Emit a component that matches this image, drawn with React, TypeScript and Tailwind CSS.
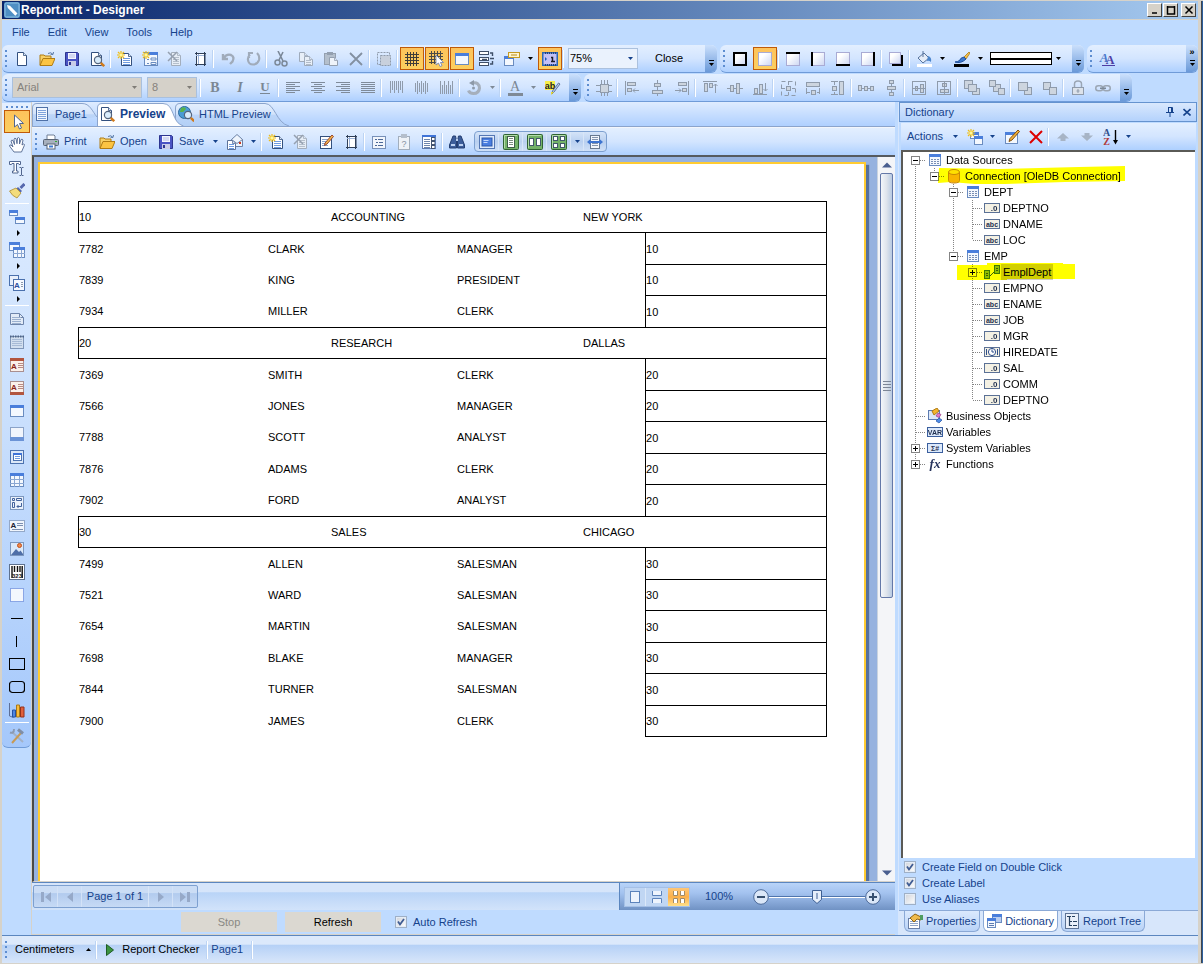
import React from "react";

/* ---------- icon drawing helpers ---------- */

const NAVY = "#33507e";
const GRAY = "#8f9bab";

type PageProps = { x?: number; y?: number; w?: number; h?: number; s?: string; f?: string };

function Sheet({ x = 3, y = 1, w = 10, h = 14, s = NAVY, f = "#fff" }: PageProps) {
  return (
    <>
      <path d={`M${x + 0.5} ${y + 0.5}h${w - 4}l3 3v${h - 4}h${-(w - 1)}z`} fill={f} stroke={s} />
      <path d={`M${x + w - 3.5} ${y + 0.5}v3h3`} fill="#dbe6f5" stroke={s} strokeWidth="0.8" />
    </>
  );
}

function Lines({ x, y, w, n, gap = 2, s = "#6f9be0" }: { x: number; y: number; w: number; n: number; gap?: number; s?: string }) {
  return (
    <>
      {Array.from({ length: n }, (_, i) => (
        <path key={i} d={`M${x} ${y + i * gap + 0.5}h${w}`} stroke={s} />
      ))}
    </>
  );
}

function Spark() {
  return (
    <>
      <path d="M4 0v8M0 4h8M1 1l6 6M7 1l-6 6" stroke="#eebc18" strokeWidth="1.2" />
      <rect x="2.5" y="2.5" width="3" height="3" fill="#fff79a" />
    </>
  );
}

function Win({ x = 1, y = 2, w = 14, h = 12, f = "#f4f8fe" }: PageProps) {
  return (
    <>
      <rect x={x + 0.5} y={y + 0.5} width={w - 1} height={h - 1} fill={f} stroke="#6a8cc0" />
      <rect x={x} y={y} width={w} height="3" fill="#4a7edb" />
    </>
  );
}

function Lens({ x = 9, y = 9 }: { x?: number; y?: number }) {
  return (
    <>
      <circle cx={x} cy={y} r="3.6" fill="#d9ecfb" stroke="#55657e" strokeWidth="1.2" />
      <path d={`M${x + 2.8} ${y + 2.8}l3.4 3.4`} stroke="#d07a1c" strokeWidth="2.4" />
    </>
  );
}

function Square({ top, right, bottom, left }: { top?: boolean; right?: boolean; bottom?: boolean; left?: boolean }) {
  return (
    <>
      <rect x="1.5" y="1.5" width="13" height="13" fill="url(#sq)" stroke="#a9abd4" />
      {top && <path d="M1 2h14" stroke="#000" strokeWidth="2" />}
      {right && <path d="M14 1v14" stroke="#000" strokeWidth="2" />}
      {bottom && <path d="M1 14h14" stroke="#000" strokeWidth="2" />}
      {left && <path d="M2 1v14" stroke="#000" strokeWidth="2" />}
    </>
  );
}

function Block({ x, y, w, h }: { x: number; y: number; w: number; h: number }) {
  return <rect x={x + 0.5} y={y + 0.5} width={w - 1} height={h - 1} fill="#cdd5df" stroke={GRAY} />;
}

function Floppy() {
  return (
    <>
      <path d="M1.5 1.5h12l1 1v12h-13z" fill="#4a54c4" stroke="#2d3590" />
      <rect x="4" y="2" width="8" height="6" fill="#f3f5ff" />
      <path d="M5 4h6M5 6h6" stroke="#b4bce4" />
      <rect x="4" y="10" width="8" height="5" fill="#c9cde8" />
      <rect x="5" y="11" width="2" height="3" fill="#2d3590" />
    </>
  );
}

function Folder() {
  return (
    <>
      <path d="M1 14V4h4l1 1h6v3" fill="#f7d066" stroke="#b07c14" />
      <path d="M1 14.5l3-7h12l-3 7z" fill="#fbc443" stroke="#b07c14" />
      <path d="M9 2.5q3-2 5 1m0 0l.5-2.5m-.5 2.5l-2.5-.2" fill="none" stroke="#5a7ba8" />
    </>
  );
}

function Field({ kind }: { kind: "num" | "abc" | "date" | "var" | "sys" }) {
  const label = { num: ".0", abc: "abc", date: "", var: "VAR", sys: "Σ#" }[kind];
  const blue = kind === "var" || kind === "sys";
  return (
    <>
      <rect x="0.5" y="3.5" width="15" height="9" fill={blue ? "#dce9fb" : "#f4f1e4"} stroke={blue ? "#3b5f9e" : "#5b7196"} />
      {kind === "date" ? (
        <>
          <circle cx="8" cy="8" r="3.6" fill="#fff" stroke="#2f4f8c" />
          <path d="M8 5.5V8h2M2.5 5v6M13.5 5v6" fill="none" stroke="#2f4f8c" />
        </>
      ) : (
        <text x={kind === "num" ? 10 : 8} y="11" textAnchor="middle" fontSize={kind === "num" ? 8 : 7} fontWeight="bold" fontFamily="Liberation Sans, sans-serif" fill="#1f2f4f">
          {label}
        </text>
      )}
    </>
  );
}

function Green({ children }: { children?: React.ReactNode }) {
  return (
    <>
      <rect x="0.5" y="0.5" width="15" height="15" rx="1" fill="#73b268" stroke="#2f6332" />
      <path d="M1.5 14V1.5H14" fill="none" stroke="#b4dcaa" />
      {children}
    </>
  );
}

const g = (d: string, w = 1, s = GRAY) => <path d={d} fill="none" stroke={s} strokeWidth={w} />;

const ICONS: Record<string, React.ReactNode> = {
  app: (
    <>
      <rect width="16" height="16" rx="2" fill="#4f8fc4" />
      <rect x="1" y="1" width="14" height="14" rx="1.5" fill="none" stroke="#8fc0e4" />
      <path d="M3 3l3 .8 7.5 7.7-2.2 2.2L3.800 6z" fill="#fff" />
    </>
  ),
  new: <Sheet />,
  open: <Folder />,
  save: <Floppy />,
  preview: (<><Sheet x={2} w={11} /><Lens /></>),
  newPage: (<><Sheet x={4} y={2} w={11} h={13} /><Lines x={6} y={7} w={7} n={4} /><Spark /></>),
  newForm: (<><Win x={2} y={1} w={14} h={14} /><path d="M5 8.5h2m2-1.500h5v2h-5zM5 12.500h2m2-1h5v2h-5z" stroke="#6a8cc0" fill="none" /><Spark /></>),
  delPage: (<><Sheet x={4} y={1} w={10} s="#a3aebd" f="#e6edf6" /><Lines x={6} y={6} w={6} n={4} s="#b5bfcc" />{g("M1 1l9 9M10 1L1 10", 1.5, "#95a0b0")}</>),
  pageSetup: (<><rect x="4.5" y="2.5" width="8" height="11" fill="#fff" stroke="#2f3f58" /><path d="M6.5 3v10M4 4.500h8" stroke="#9db4da" />{g("M3 2.5h2M4.5 1v2M12 2.5h2M12.5 1v2M3 13.5h11M12.5 13v2M4.5 13v2M13 3v11", 1, "#2f3f58")}</>),
  undo: g("M3 3v5h5M3.5 7.5q3-5 7.5-3.5 4 2 1.5 6.5L10 13", 2.4, "#a0abba"),
  redo: g("M12 2q3 3 2 7-1.5 4.5-6 4.5T3 9q-.5-3 2-5.5M8 2H4v5", 2.2, "#a0abba"),
  cut: (<>{g("M5 0l5 10M10 1L6 9", 1.6, "#7c8999")}<circle cx="4.5" cy="11.5" r="2.5" fill="none" stroke="#7c8999" strokeWidth="1.5" /><circle cx="11.5" cy="12.5" r="2.5" fill="none" stroke="#7c8999" strokeWidth="1.5" /></>),
  copy: (<><Sheet x={1} y={1} w={9} h={10} s="#9fabbb" f="#e8eff8" /><Sheet x={6} y={5} w={9} h={10} s="#9fabbb" f="#e8eff8" /><Lines x={8} y={9} w={5} n={3} s="#b2bcc9" /></>),
  paste: (<><rect x="1.5" y="2.5" width="11" height="11" fill="#b4bfcc" stroke="#94a0b0" /><rect x="4" y="1" width="6" height="3" fill="#94a0b0" /><Sheet x={6} y={6} w={9} h={9} s="#94a0b0" f="#eef3fa" /></>),
  del: g("M2 2l12 12M14 2L2 14", 1.8, "#8390a1"),
  select: (<><rect x="1.5" y="1.5" width="12" height="12" fill="none" stroke={GRAY} strokeDasharray="2 1" /><rect x="4.5" y="4.5" width="10" height="10" fill="#c8d0dc" stroke={GRAY} strokeDasharray="2 1" /></>),
  grid: g("M3.5 1v14M6.5 1v14M9.5 1v14M12.5 1v14M1 3.5h14M1 6.5h14M1 9.5h14M1 12.5h14", 1, "#3f3c38"),
  gridSnap: (<>{g("M2.5 0v13M5.5 0v13M8.5 0v13M11.5 0v13M0 2.5h14M0 5.5h14M0 8.5h14M0 11.5h8", 1, "#4b4a46")}<path d="M7 4v10l2.5-2 1.5 3.5 2-.8-1.5-3.2h3z" fill="#fff" stroke="#6a7dad" strokeWidth="0.8" /></>),
  window: <Win />,
  order: (<>{[1, 7, 12].map((y) => (<rect key={y} x="0.5" y={y - 0.5} width="9" height="3" fill="#fff" stroke="#3f4f68" />))}{g("M11 2h2.5v3M11 13h2.5v-3", 1.4, "#3f4f68")}{g("M11 7.5h4M3 8.500h5", 1.5, "#3f4f68")}</>),
  note: (<><Win x={0} y={5} w={10} h={10} /><rect x="4.5" y="1.5" width="11" height="5" fill="#fff5cf" stroke="#c59a22" /><path d="M7 4h6" stroke="#b68c1a" /></>),
  ruler: (<><rect x="0.75" y="1.75" width="14.5" height="12.5" fill="#c3c0f6" stroke="#2c67b5" strokeWidth="1.5" />{g("M3.5 1v2M5.5 1v2M7.5 1v2M9.5 1v2M11.5 1v2M13.5 1v2M3.5 13v2M5.5 13v2M7.5 13v2M9.5 13v2M11.5 13v2M13.5 13v2", 1, "#23407e")}<path d="M3 6v4l2-2z" fill="#1c5bc2" />{g("M9 6.5h1.5v4M9 10.5h4", 1.5, "#1c1c28")}</>),
  bold: <text x="8" y="12" textAnchor="middle" fontSize="14" fontWeight="bold" fontFamily="Liberation Serif, serif" fill="#7b8794">B</text>,
  italic: <text x="8" y="12" textAnchor="middle" fontSize="14" fontWeight="bold" fontStyle="italic" fontFamily="Liberation Serif, serif" fill="#7b8794">I</text>,
  underline: (<><text x="8" y="11" textAnchor="middle" fontSize="13" fontFamily="Liberation Serif, serif" fontWeight="bold" fill="#7b8794">U</text>{g("M3 13.5h10", 1, "#7b8794")}</>),
  alignL: g("M1 2.5h14M1 4.5h9M1 6.5h14M1 8.5h9M1 10.5h14M1 12.5h9", 1, "#7f8b9a"),
  alignC: g("M1 2.5h14M4 4.5h8M1 6.5h14M4 8.5h8M1 10.5h14M4 12.5h8", 1, "#7f8b9a"),
  alignR: g("M1 2.5h14M6 4.5h9M1 6.5h14M6 8.5h9M1 10.5h14M6 12.5h9", 1, "#7f8b9a"),
  alignJ: g("M1 2.5h14M1 4.5h14M1 6.5h14M1 8.5h14M1 10.5h14M1 12.5h14", 1, "#7f8b9a"),
  vTop: g("M2.5 1v12M4.5 1v9M6.5 1v12M8.5 1v9M10.5 1v12M12.5 1v9M14.5 1v12"),
  vMid: g("M2.5 3v9M4.5 1v13M6.5 3v9M8.5 1v13M10.5 3v9M12.5 1v13M14.5 3v9"),
  vBot: g("M2.5 1v13M4.5 5v9M6.5 1v13M8.5 5v9M10.5 1v13M12.5 5v9M14.5 1v13"),
  rotate: (<>{g("M7 3q6-1 6.500 5-.5 5.500-6 5.500-4 0-5-3", 3, "#a5afbc")}<path d="M8 0v6L3 3z" fill="#8d99a8" /><circle cx="7.5" cy="8" r="1.5" fill={GRAY} /></>),
  fontColor: (<><text x="8" y="11" textAnchor="middle" fontSize="14" fontFamily="Liberation Serif, serif" fill="#7b8794">A</text><rect x="1" y="13" width="15" height="3" fill="#7f8a97" /></>),
  highlight: (<><rect x="0" y="1" width="10" height="9" fill="#f7ee4a" /><text x="5" y="9" textAnchor="middle" fontSize="9" fontWeight="bold" fontFamily="Liberation Sans, sans-serif" fill="#222">ab</text><path d="M15 4l-6 8-2 2 .5-3 6-8z" fill="#b9cdec" stroke="#4b5f86" strokeWidth="0.8" /><path d="M6 12h3l-3 3z" fill="#e9d932" /></>),
  rectFull: <rect x="2" y="2" width="12" height="12" fill="url(#sq)" stroke="#000" strokeWidth="2" />,
  rectNone: <Square />,
  rectTop: <Square top />,
  rectLeft: <Square left />,
  rectBottom: <Square bottom />,
  rectRight: <Square right />,
  shadow: (<><rect x="4" y="4" width="11" height="11" fill="#000" /><rect x="1.5" y="1.5" width="11" height="11" fill="url(#sq)" stroke="#a9abd4" /></>),
  fill: (<><path d="M2 7l6-5 5 5-6 5z" fill="#e4ecf8" stroke="#56739c" /><path d="M7 0v6" stroke="#56739c" /><path d="M12 5q4 1 3 6-2-2-4-1z" fill="#4c86cc" /><rect x="1" y="13" width="15" height="3" fill="#fff" /></>),
  brush: (<><path d="M15 1l-5 5 2 2 4-6z" fill="#f4c04a" stroke="#a97818" strokeWidth="0.8" /><path d="M10 6q-4 1-4 3-2 2-5 2 6 2 11-3z" fill="#3d78cf" stroke="#23519b" /><rect x="0" y="13" width="15" height="3" fill="#000" /></>),
  styles: (<><text x="5" y="11" textAnchor="middle" fontSize="13" fontStyle="italic" fontWeight="bold" fontFamily="Liberation Serif, serif" fill="#4a79cc">A</text><text x="11" y="13" textAnchor="middle" fontSize="12" fontWeight="bold" fontFamily="Liberation Serif, serif" fill="#4d3da4">A</text><path d="M3 14.5h13" stroke="#4d3da4" /></>),
  alignGrid: (<><Block x={4} y={4} w={9} h={9} />{g("M5.5 0v4M11.5 0v4M5.5 13v3M11.5 13v3M0 5.5h4M0 11.5h4M13 5.5h3M13 11.5h3M8.5 0v4M8.5 13v3")}</>),
  oLeft: (<>{g("M1.5 1v14")}<Block x={3} y={2} w={9} h={4} /><Block x={3} y={8} w={5} h={4} />{g("M15 10.5H9m2-2l-2 2 2 2")}</>),
  oCenter: (<>{g("M8.5 0v16")}<Block x={5} y={3} w={7} h={4} /><Block x={3} y={10} w={11} h={4} /></>),
  oRight: (<>{g("M14.5 1v14")}<Block x={4} y={2} w={9} h={4} /><Block x={8} y={8} w={5} h={4} />{g("M1 10.5h6m-2-2l2 2-2 2")}</>),
  oTop: (<>{g("M1 1.5h14")}<Block x={2} y={3} w={4} h={9} /><Block x={7} y={3} w={4} h={5} />{g("M13.5 13V4m-2 2l2-2 2 2")}</>),
  oMiddle: (<>{g("M0 8.5h16")}<Block x={3} y={5} w={4} h={7} /><Block x={9} y={3} w={4} h={11} /></>),
  oBottom: (<>{g("M1 14.5h14")}<Block x={2} y={8} w={4} h={6} /><Block x={7} y={4} w={4} h={10} />{g("M13.5 3v8m-2-2l2 2 2-2")}</>),
  sizeBoth: (<><rect x="1.5" y="1.5" width="14" height="14" fill="none" stroke={GRAY} strokeDasharray="4 3" /><Block x={6} y={6} w={5} h={5} />{g("M8.5 1v4M8.5 12v3M1 8.5h4M12 8.5h3")}</>),
  sizeW: (<><Block x={1} y={2} w={14} h={5} /><Block x={6} y={10} w={5} h={5} />{g("M1 12.5h4M12 12.5h3M1.5 8v6M14.5 8v6")}</>),
  sizeH: (<><Block x={9} y={1} w={5} h={14} /><Block x={2} y={6} w={5} h={5} />{g("M4.5 1v4M4.5 12v3M1 1.5h7M1 14.5h7")}</>),
  spaceH: (<>{g("M0 8.5h16")}<Block x={0} y={5} w={4} h={6} /><Block x={6} y={6} w={4} h={5} /><Block x={12} y={6} w={4} h={5} /></>),
  spaceV: (<>{g("M8.5 0v16")}<Block x={6} y={0} w={5} h={4} /><Block x={4} y={6} w={9} h={4} /><Block x={6} y={12} w={5} h={4} /></>),
  centerH: (<><rect x="1.5" y="1.5" width="13" height="13" fill="none" stroke={GRAY} /><Block x={4} y={6} w={3} h={5} /><Block x={9} y={4} w={4} h={9} />{g("M2 8.5h12")}</>),
  centerV: (<><rect x="1.5" y="1.5" width="13" height="13" fill="none" stroke={GRAY} /><Block x={6} y={3} w={5} h={4} /><Block x={4} y={9} w={9} h={4} />{g("M8.5 2v12")}</>),
  front: (<><Block x={0} y={0} w={9} h={9} /><Block x={8} y={8} w={8} h={7} /><Block x={4} y={4} w={9} h={8} /></>),
  back: (<><Block x={4} y={4} w={8} h={8} /><Block x={0} y={0} w={7} h={7} /><Block x={9} y={8} w={7} h={7} /></>),
  forward: (<><Block x={7} y={7} w={8} h={8} /><Block x={1} y={2} w={10} h={9} /></>),
  backward: (<><Block x={1} y={2} w={8} h={8} /><Block x={7} y={7} w={8} h={8} /></>),
  lock: (<>{g("M4.5 8V4q0-3 3.500-3t3.500 3v4", 1.5, "#9ba6b4")}<rect x="2.5" y="7.5" width="11" height="7" fill="#dce2ea" stroke={GRAY} /><path d="M8 9v4M6.5 11h3" stroke={GRAY} /></>),
  link: (<><rect x="0.75" y="5.75" width="7" height="5" rx="2.5" fill="none" stroke="#9ba6b4" strokeWidth="1.5" /><rect x="8.25" y="5.75" width="7" height="5" rx="2.5" fill="none" stroke="#9ba6b4" strokeWidth="1.5" /><path d="M5 8.25h6" stroke="#7d8998" strokeWidth="1.5" /></>),
  pointer: <path d="M5.5 1v12l3-2.500 2 4.500 2-1-2-4.500h4z" fill="#fff" stroke="#51668f" />,
  hand: <path d="M5 15l-4.500-6q0-1.500 1.500-1l2 2-2-6q.5-1.500 2-.5l1.500 4L5 2q.8-1.500 2-.3l1 5L8.500 1q1-1 2 .3V7l1.500-4.500q1.200-.8 2 .5L13 8l1.500-1q1.500.2.8 1.500L12.500 15z" fill="#fff" stroke="#51668f" strokeWidth="0.9" />,
  textTool: (<><path d="M.5 1.500h11v3H10l-.5-1h-2V11H9v2H3.500v-2H5V3.500H3l-.5 1H.5z" fill="#fff" stroke="#51668f" /><path d="M10.500 7.500h1.500l.5.5.5-.5h1.500M12.500 8v7M10.500 15.500h1.500l.5-.5.5.5h1.500" fill="none" stroke="#51668f" /></>),
  broom: (<><path d="M15.500 1l-4 4" stroke="#5668ae" strokeWidth="3" /><path d="M9 4l4 4-1.500 1.500-4-4z" fill="#5668ae" /><path d="M7 5l5 5-4 5Q3 13 .5 8z" fill="#f3dc7c" stroke="#a98b34" strokeWidth="0.8" /></>),
  bands: (<><Win x={0} y={1} w={9} h={6} /><Win x={6} y={8} w={10} h={7} /></>),
  crossBands: (<><Win x={0} y={0} w={11} h={9} /><Win x={4} y={5} w={12} h={11} />{g("M4 11.5h12M8.5 8v8M12.5 8v8", 1, "#8ba7d2")}</>),
  texts: (<><rect x="0.5" y="0.5" width="9" height="10" fill="#e8effb" stroke="#4a70ad" /><rect x="4.5" y="4.5" width="11" height="11" fill="#f6f9ff" stroke="#4a70ad" /><text x="8" y="13" textAnchor="middle" fontSize="8" fontWeight="bold" fontFamily="Liberation Sans, sans-serif" fill="#2c51a0">A</text>{g("M12 7.5h2M12 9.5h2M12 11.5h2")}</>),
  reportTitle: (<><path d="M1.5 2.5h9l4 4v7h-13z" fill="#e2ebf7" stroke="#6e85ab" /><path d="M10.5 2.5v4h4" fill="none" stroke="#6e85ab" /><Lines x={3} y={6} w={9} n={4} s="#9bb0cf" /></>),
  reportSummary: (<><rect x="1.5" y="2.5" width="13" height="12" fill="#d2dfef" stroke="#7f96b8" /><path d="M1 2.5h14" stroke="#4e6486" strokeWidth="2" strokeDasharray="1.5 1" /><Lines x={3} y={5} w={10} n={4} s="#a7bad5" /></>),
  headerBand: (<><rect x="1.5" y="2.5" width="13" height="12" fill="#fbf0ea" stroke="#a98f90" /><rect x="1" y="1" width="14" height="3" fill="#b2553f" /><text x="5" y="12" textAnchor="middle" fontSize="8" fontWeight="bold" fontFamily="Liberation Sans, sans-serif" fill="#8a2418">A</text><Lines x={9} y={6} w={5} n={3} s="#b98b84" /></>),
  footerBand: (<><rect x="1.5" y="1.5" width="13" height="12" fill="#fbf0ea" stroke="#a98f90" /><rect x="1" y="12" width="14" height="3" fill="#b2553f" /><text x="5" y="10" textAnchor="middle" fontSize="8" fontWeight="bold" fontFamily="Liberation Sans, sans-serif" fill="#8a2418">A</text><Lines x={9} y={4} w={5} n={3} s="#b98b84" /></>),
  pageFooter: (<><rect x="1.5" y="1.5" width="13" height="13" fill="#f1f5fc" stroke="#8ba3c8" /><rect x="1" y="11" width="14" height="4" fill="#6b93d6" /></>),
  dataBand: (<><rect x="1.5" y="1.5" width="13" height="13" fill="#dce8f8" stroke="#4d73b0" /><rect x="4.5" y="4.5" width="8" height="7" fill="#fff" stroke="#4d73b0" /><rect x="4" y="4" width="9" height="2" fill="#3f74d8" /><Lines x={6} y={7} w={5} n={2} /></>),
  table: (<><Win x={1} y={1} w={14} h={14} />{g("M1 7.5h14M1 11.5h14M5.5 4v11M10.5 4v11", 1, "#8ba7d2")}</>),
  crossTab: (<><rect x="1.5" y="1.5" width="13" height="13" fill="#eaf1fb" stroke="#7c97be" />{g("M3.5 3.5h2v2h-2zM7.5 3.5h5v2h-5zM3.5 7.5h2v5h-2z", 1, "#42629c")}{g("M12.5 8v3.500H8m1.500-1.500L8 11.500 9.500 13", 1, "#42629c")}</>),
  textComp: (<><rect x="0.5" y="2.5" width="15" height="11" fill="#f0f5fc" stroke="#93a8c8" /><text x="4.5" y="10" textAnchor="middle" fontSize="8" fontWeight="bold" fontFamily="Liberation Sans, sans-serif" fill="#223">A</text><Lines x={8} y={5} w={6} n={2} s="#7c8fb0" /><Lines x={3} y={11} w={11} n={1} s="#7c8fb0" /></>),
  image: (<><rect x="1.5" y="1.5" width="13" height="13" fill="#dbe9fa" stroke="#7c97be" /><path d="M2 14l5-6 3 3 1.500-1.500L14 13v1z" fill="#4f6fa8" /><circle cx="10.5" cy="4.5" r="2" fill="#f08a4a" stroke="#c0501c" /></>),
  barcode: (<><rect x="0.5" y="0.5" width="15" height="15" fill="#fff" stroke="#5d718f" /><path d="M3 2v12M5.500 2v6M8.500 2v6M11 2v6M13.200 2v12" stroke="#111" strokeWidth="1.4" /><text x="8" y="14" textAnchor="middle" fontSize="6" fontWeight="bold" fontFamily="Liberation Sans, sans-serif" fill="#111">323</text></>),
  panel: <rect x="1.5" y="1.5" width="13" height="13" fill="#f3f7fd" stroke="#4066cc" strokeDasharray="1 1" />,
  hLine: <path d="M2 8.5h12" stroke="#000" />,
  vLine: <path d="M7.5 3v11" stroke="#000" />,
  rect: <rect x="0.5" y="2.5" width="15" height="11" fill="none" stroke="#000" />,
  roundRect: <rect x="0.5" y="2.5" width="15" height="11" rx="3" fill="none" stroke="#000" strokeWidth="1.2" />,
  chart: (<>{g("M.5 1v13l4 1.5", 1, "#5c6f98")}<path d="M3.5 8h3v7h-3z" fill="#4e86e0" stroke="#2452a4" /><path d="M7.5 3h3v12h-3z" fill="#f9bd3c" stroke="#a97818" /><path d="M11.5 5h3.5v10h-3.5z" fill="#e0603c" stroke="#96311a" /></>),
  tools: (<>{g("M3 4l11 10", 2, "#a3b1c6")}{g("M12 5L3 15", 2, "#c79a55")}{g("M9 1.500l5 4", 3, "#7f8ea6")}{g("M1 4.500q4 1.500 4-3.500", 2, "#8b9ab2")}</>),
  print: (<><path d="M4 6V1h7l1 1v4" fill="#fff" stroke="#6f7f96" /><rect x="0.5" y="5.5" width="15" height="6" rx="1" fill="#a7b0bd" stroke="#586476" /><rect x="4" y="10" width="8" height="5" fill="#fff" stroke="#586476" /><path d="M6 12.5h4" stroke="#3d7ad0" strokeWidth="2" /><rect x="12" y="7" width="2" height="1" fill="#3a3" /></>),
  mail: (<><path d="M4.5 5.5l5.500-5 5.500 5v7h-11z" fill="#eef4fc" stroke="#6c82a6" /><path d="M4.5 5.5l5.500 4 5.500-4" fill="none" stroke="#6c82a6" /><Sheet x={0} y={6} w={9} h={10} s="#5c7299" /><Lines x={2} y={10} w={5} n={3} /><path d="M13 8v2" stroke="#d03a20" strokeWidth="2" /></>),
  editPage: (<><rect x="2.5" y="2.5" width="11" height="12" fill="#fff" stroke={NAVY} /><Lines x={4} y={5} w={6} n={4} s="#8aa4cc" /><path d="M14 1l1.500 1.500L9 10l-2.500 1.500.5-2.500z" fill="#f2b84a" stroke="#9a4430" /></>),
  bookmark: (<><rect x="1.5" y="2.5" width="13" height="12" fill="#f2f6fc" stroke="#7790b8" />{g("M4 5.5h2M7 5.5h5M5 8.5h2M8 8.5h4M4 11.5h2M7 11.5h5", 1, "#4c6897")}</>),
  params: (<><rect x="2.5" y="2.5" width="11" height="13" fill="#eef2f7" stroke="#a2aebd" /><rect x="5" y="0" width="6" height="4" fill="#b4becb" /><text x="8" y="13" textAnchor="middle" fontSize="9" fontFamily="Liberation Sans, sans-serif" fill="#8793a3">?</text></>),
  thumbs: (<><rect x="1.5" y="1.5" width="13" height="13" fill="#fff" stroke="#5d7bb0" /><rect x="1" y="1" width="14" height="2" fill="#3f74d8" /><Lines x={3} y={5} w={6} n={5} s="#6d85ac" /><path d="M12 3v12" stroke="#43546f" strokeWidth="4" /><path d="M11 5h2.500M11 9h2.500M11 13h2.500" stroke="#fff" strokeWidth="2" /></>),
  find: (<><path d="M4 2h2.500l1 5v7H.5v-3zM9.500 2H12l3.500 9v3h-7V7z" fill="#3c5d9a" stroke="#253f72" /><path d="M2 11h4M10 11h4M7 6h2" stroke="#bcd0f0" strokeWidth="2" /></>),
  fullScreen: (<><rect x="0.5" y="1.5" width="15" height="13" fill="#dfeafb" stroke="#5477b4" /><rect x="3" y="4" width="10" height="8" fill="#4b7ee0" stroke="#2b56a8" /><path d="M4.5 6.5h5M4.5 8.5h4" stroke="#c4d8fb" /></>),
  viewOne: (<Green><rect x="4.5" y="2.5" width="7" height="11" fill="#fff" stroke="#3e5d48" /><Lines x={6} y={4} w={4} n={4} s="#7a8f80" /></Green>),
  viewTwo: (<Green><rect x="2.5" y="4.5" width="4" height="7" fill="#fff" stroke="#42586a" /><rect x="9.5" y="4.5" width="4" height="7" fill="#fff" stroke="#42586a" /></Green>),
  viewMany: (<Green>{[[2.5, 2.5], [9.5, 2.5], [2.5, 9.5], [9.5, 9.5]].map(([x, y]) => (<rect key={`${x}-${y}`} x={x} y={y} width="4" height="4" fill="#fff" stroke="#42586a" />))}</Green>),
  pageWidth: (<><rect x="3.5" y="1.5" width="9" height="13" fill="#f2f6fc" stroke="#67788f" /><Lines x={5} y={3} w={6} n={5} s="#8494ac" /><path d="M0 8l3.500-3v6zM16 8l-3.500-3v6z" fill="#3d74d0" /><path d="M2 8h12" stroke="#3d74d0" strokeWidth="2" /></>),
  htmlPreview: (<><circle cx="6.5" cy="6.5" r="6" fill="#4b9cd4" stroke="#2c6a9c" /><path d="M3 2q4-2 5 1l-3 3-3 0zM7 7l4-1 1 2-3 4-2-1z" fill="#58b34a" /><Lens x={10} y={9} /></>),
  pageTab: (<><rect x="2.5" y="1.5" width="11" height="13" fill="#f2f7fe" stroke="#4f71a8" /><Lines x={4} y={4} w={8} n={5} s="#7fa3dc" /></>),
  newItem: (<><Win x={3} y={3} w={9} h={7} /><Win x={7} y={7} w={9} h={9} /><Spark /></>),
  edit: (<><Win x={1} y={3} w={13} h={12} /><path d="M14 1l1.500 1.500L8 11l-3 1.500 1-3z" fill="#f2b23a" stroke="#83500f" /></>),
  remove: g("M2 2l12 12M14 2L2 14", 2, "#d00"),
  up: <path d="M8 4l6 5.500h-3.500V12h-5V9.500H2z" fill="#a7b4c5" />,
  down: <path d="M8 12l6-5.500h-3.500V4h-5v2.500H2z" fill="#a7b4c5" />,
  sort: (<><text x="3.5" y="7" textAnchor="middle" fontSize="10" fontWeight="bold" fontFamily="Liberation Serif, serif" fill="#30508c">A</text><text x="3.5" y="15.5" textAnchor="middle" fontSize="10" fontWeight="bold" fontFamily="Liberation Serif, serif" fill="#b03838">Z</text><path d="M12.5 1v11" stroke="#000" strokeWidth="1.4" /><path d="M10 11h5l-2.500 4.500z" fill="#000" /></>),
  dataTable: (<><Win x={2} y={2} w={12} h={12} />{g("M4 7.5h2m1 0h2m1 0h2M4 9.5h2m1 0h2m1 0h2M4 11.5h2m1 0h2m1 0h2", 1, "#7a8fb4")}</>),
  database: (<><path d="M2.5 4v8.500q0 2.500 5.500 2.500t5.500-2.500V4" fill="#f9b52c" stroke="#c98a18" /><ellipse cx="8" cy="4" rx="5.5" ry="2.5" fill="#ffe07a" stroke="#c98a18" /></>),
  relation: (<><rect x="0.5" y="6.5" width="5" height="8" fill="#8fbf40" stroke="#3f7a28" /><rect x="10.5" y="1.5" width="5" height="8" fill="#8fbf40" stroke="#3f7a28" />{g("M2 9.5h2M2 11.5h2M12 4.5h2M12 6.5h2M6 12l4-4", 1, "#3f5f1c")}</>),
  num: <Field kind="num" />,
  abc: <Field kind="abc" />,
  date: <Field kind="date" />,
  variable: <Field kind="var" />,
  system: <Field kind="sys" />,
  business: (<><rect x="1.5" y="2.5" width="11" height="9" fill="#dce8f8" stroke="#5d7bb0" /><path d="M5 3l5-3 2 3-5 4z" fill="#f5b52c" stroke="#b07c14" /><path d="M11 5l3 1.500-2 3-3-1.500z" fill="#e07ac8" stroke="#9c3f86" strokeWidth="0.7" /><path d="M12 10l3 2-3 3-3-2z" fill="#4c8ce8" stroke="#2452a4" strokeWidth="0.7" /></>),
  fx: <text x="8" y="12" textAnchor="middle" fontSize="13" fontStyle="italic" fontWeight="bold" fontFamily="Liberation Serif, serif" fill="#26335c">fx</text>,
  properties: (<><rect x="1.5" y="5.5" width="11" height="10" fill="#fff" stroke="#6a7fa6" /><Lines x={3} y={8} w={8} n={3} s="#8fa4c6" /><path d="M3 5l5-4 6 3v3l-4-1-3 3z" fill="#f0bb4c" stroke="#8f6414" /><path d="M13 2h3v5h-3z" fill="#4f9c60" /></>),
  dictionary: (<><Win x={6} y={1} w={10} h={9} f="#b9cdf0" /><Win x={1} y={5} w={9} h={10} />{g("M3 10.5h5M3 12.5h5", 1, "#5d7bb0")}</>),
  reportTree: (<><rect x="1.5" y="0.5" width="13" height="15" fill="#eaf0fa" stroke="#5d7395" />{g("M3 3.5h4M5.5 4v8.500H8M5.5 8.5H8M9 8.5h4M9 12.5h4M8 3.5h3", 1.2, "#26405f")}</>),
};

function Icon({ name }: { name: string }) {
  return (
    <svg viewBox="0 0 16 16" aria-hidden="true" className="size-4 shrink-0">
      {ICONS[name]}
    </svg>
  );
}

/* ---------- toolbar parts ---------- */

function Tri({ dir = "down", tone = "text-black" }: { dir?: "down" | "up" | "right"; tone?: string }) {
  const d = { down: "M0 1h5L2.5 4z", up: "M0 4h5L2.5 1z", right: "M1 0v6l3-3z" }[dir];
  return (
    <svg viewBox="0 0 5 6" aria-hidden="true" className={`h-[6px] w-[5px] shrink-0 ${tone}`}>
      <path d={d} fill="currentColor" />
    </svg>
  );
}

function Btn({ icon, on, tight }: { icon: string; on?: boolean; tight?: boolean }) {
  return (
    <button type="button" aria-label={icon} aria-pressed={on} className={`flex h-[23px] shrink-0 items-stretch pl-px ${tight ? "w-6" : "w-[25px]"}`}>
      <span className={`flex flex-1 items-center justify-center ${on ? "border border-[#c05a08] bg-linear-to-b from-[#fdc35c] to-[#fccf5f]" : ""}`}>
        <Icon name={icon} />
      </span>
    </button>
  );
}

function Drop({ label, tone }: { label: string; tone?: string }) {
  return (
    <button type="button" aria-label={label} className="flex h-[23px] w-[13px] shrink-0 items-center justify-center">
      <Tri tone={tone} />
    </button>
  );
}

function Sep() {
  return <span className="mr-px h-[18px] w-[2px] shrink-0 border-r border-white bg-[#bcd4f4]" />;
}

function Grip() {
  return (
    <span className="flex w-[7px] shrink-0 flex-col items-center gap-[3px]">
      {[0, 1, 2, 3].map((i) => (
        <span key={i} className="size-[2px] bg-[#5d8dd0]" />
      ))}
    </span>
  );
}

function Bar({ children, className = "", more }: { children: React.ReactNode; className?: string; more?: boolean }) {
  return (
    <div className={`flex h-7 items-stretch overflow-hidden rounded-md border-b border-[#6f9bd8] bg-linear-to-b from-[#e3efff] via-[#d3e5ff] to-[#aed0ff] ${className}`}>
      <div className="flex min-w-0 flex-1 items-center">
        <Grip />
        {children}
      </div>
      <button type="button" aria-label="Toolbar options" className="flex w-[12px] shrink-0 flex-col items-center justify-end gap-px bg-linear-to-b from-[#cbe0fc] to-[#6a99d8] pb-1">
        {more && <span className="mb-[3px] text-[9px] leading-[7px] font-bold text-black">»</span>}
        <span className="h-px w-[5px] bg-black" />
        <Tri />
      </button>
    </div>
  );
}

function Btns({ names, on = [], tight }: { names: string[]; on?: string[]; tight?: boolean }) {
  return (
    <>
      {names.map((n) => (
        <Btn key={n} icon={n} on={on.includes(n)} tight={tight} />
      ))}
    </>
  );
}

function Combo({ label, value, disabled, width }: { label: string; value: string; disabled?: boolean; width: string }) {
  return (
    <span className={`relative flex h-[21px] shrink-0 items-center ${width}`}>
      <select
        aria-label={label}
        disabled={disabled}
        defaultValue={value}
        className={`h-full w-full appearance-none border text-[11px] opacity-100 ${disabled ? "border-[#a9c0de] bg-[#d5d1c9] pl-1 text-[#85827c]" : "border-[#abc1de] bg-[#eaf2fd] pl-px text-black"}`}
      >
        <option>{value}</option>
      </select>
      <span className="pointer-events-none absolute right-[5px]">
        <Tri tone={disabled ? "text-[#7f7c76]" : "text-[#15428b]"} />
      </span>
    </span>
  );
}

function Check({ label, checked }: { label: string; checked?: boolean }) {
  return (
    <label className="flex h-4 items-center gap-[6px] text-[11px] text-[#15428b]">
      <span className="relative flex size-3">
        <input type="checkbox" defaultChecked={checked} className="peer size-3 appearance-none border border-[#9fb0c6] bg-linear-to-br from-[#cfd3da] to-white ring-1 ring-[#e4ecf6] ring-inset" />
        <svg viewBox="0 0 12 12" aria-hidden="true" className="pointer-events-none absolute inset-0 hidden peer-checked:block">
          <path d="M3 5.5l2 3 4-5.5" fill="none" stroke="#3f5c93" strokeWidth="1.8" />
        </svg>
      </span>
      {label}
    </label>
  );
}

/* ---------- document ---------- */

type Dept = { no: string; name: string; city: string; staff: [string, string, string][] };

const DEPTS: Dept[] = [
  { no: "10", name: "ACCOUNTING", city: "NEW YORK", staff: [["7782", "CLARK", "MANAGER"], ["7839", "KING", "PRESIDENT"], ["7934", "MILLER", "CLERK"]] },
  { no: "20", name: "RESEARCH", city: "DALLAS", staff: [["7369", "SMITH", "CLERK"], ["7566", "JONES", "MANAGER"], ["7788", "SCOTT", "ANALYST"], ["7876", "ADAMS", "CLERK"], ["7902", "FORD", "ANALYST"]] },
  { no: "30", name: "SALES", city: "CHICAGO", staff: [["7499", "ALLEN", "SALESMAN"], ["7521", "WARD", "SALESMAN"], ["7654", "MARTIN", "SALESMAN"], ["7698", "BLAKE", "MANAGER"], ["7844", "TURNER", "SALESMAN"], ["7900", "JAMES", "CLERK"]] },
];

function Report() {
  return (
    <table className="w-full table-fixed border-separate border-spacing-0 text-[11px] leading-[14px] text-black">
      <colgroup>
        <col className="w-[189px]" />
        <col className="w-[63px]" />
        <col className="w-[126px]" />
        <col className="w-[126px]" />
        <col className="w-[63px]" />
        <col />
      </colgroup>
      {DEPTS.map((d, k) => (
        <tbody key={d.no}>
          <tr className="h-[31px]">
            <td colSpan={2} className="border-t border-l border-black p-0">{d.no}</td>
            <td colSpan={2} className="border-t border-black p-0 pl-px">{d.name}</td>
            <td colSpan={2} className="border-t border-r border-black p-0 pl-px">{d.city}</td>
          </tr>
          {d.staff.map(([id, name, job], i) => {
            const top = i === 0 ? "border-t border-black" : "";
            const end = k === DEPTS.length - 1 && i === d.staff.length - 1;
            return (
              <tr key={id} className={i % 2 === 0 || end ? "h-[32px]" : "h-[31px]"}>
                <td className={`p-0 pl-px ${top}`}>{id}</td>
                <td colSpan={2} className={`p-0 pl-px ${top}`}>{name}</td>
                <td colSpan={2} className={`p-0 pl-px ${top}`}>{job}</td>
                <td className={`border-t border-r border-l border-black p-0 ${end ? "border-b" : ""}`}>{d.no}</td>
              </tr>
            );
          })}
        </tbody>
      ))}
    </table>
  );
}

/* ---------- dictionary tree ---------- */

type Node = { icon: string; text: string; kids?: Node[]; closed?: boolean; mark?: "wide" | "short" };

const TREE: Node[] = [
  {
    icon: "dataTable", text: "Data Sources", kids: [
      {
        icon: "database", text: "Connection [OleDB Connection]", mark: "wide", kids: [
          { icon: "dataTable", text: "DEPT", kids: [{ icon: "num", text: "DEPTNO" }, { icon: "abc", text: "DNAME" }, { icon: "abc", text: "LOC" }] },
          {
            icon: "dataTable", text: "EMP", kids: [
              { icon: "relation", text: "EmplDept", closed: true, mark: "short" },
              { icon: "num", text: "EMPNO" },
              { icon: "abc", text: "ENAME" },
              { icon: "abc", text: "JOB" },
              { icon: "num", text: "MGR" },
              { icon: "date", text: "HIREDATE" },
              { icon: "num", text: "SAL" },
              { icon: "num", text: "COMM" },
              { icon: "num", text: "DEPTNO" },
            ],
          },
        ],
      },
    ],
  },
  { icon: "business", text: "Business Objects" },
  { icon: "variable", text: "Variables" },
  { icon: "system", text: "System Variables", closed: true },
  { icon: "fx", text: "Functions", closed: true },
];

function Branch({ nodes, guides }: { nodes: Node[]; guides: boolean[] }) {
  return (
    <ul role={guides.length ? "group" : "tree"}>
      {nodes.map((n, i) => {
        const last = i === nodes.length - 1;
        const first = guides.length === 0 && i === 0;
        const box = n.kids || n.closed;
        return (
          <li key={n.text + i} role="treeitem">
            <div className="relative flex h-4 items-center">
              {guides.map((on, k) => (
                <svg key={k} viewBox="0 0 19 16" aria-hidden="true" className="h-4 w-[19px] shrink-0">
                  {on && <path d="M9.5 0v16" stroke="#848484" strokeDasharray="1 1" />}
                </svg>
              ))}
              <svg viewBox="0 0 19 16" aria-hidden="true" className="h-4 w-[19px] shrink-0">
                <path d={`M9.5 ${first ? 8 : 0}V${last ? 8 : 16}M10 8.5h9`} fill="none" stroke="#848484" strokeDasharray="1 1" />
                {box && (
                  <>
                    <rect x="5.5" y="4.5" width="8" height="8" fill="#fff" stroke="#848484" />
                    <path d={n.closed ? "M7 8.5h5M9.5 6v5" : "M7 8.5h5"} stroke="#000" />
                  </>
                )}
              </svg>
              <span className="flex w-[19px] shrink-0 justify-center">
                <Icon name={n.icon} />
              </span>
              <span className={`px-[2px] text-[11px] leading-4 whitespace-nowrap text-black ${n.mark === "short" ? "bg-[#d2cfc8]" : ""}`}>{n.text}</span>
              {n.mark === "wide" && (
                <svg viewBox="0 0 188 19" aria-hidden="true" className="pointer-events-none absolute -top-[2px] left-[32px] h-[19px] w-[188px] mix-blend-multiply">
                  <path d="M1 2l60 1 40-1 40-1 46-1v15l-60 1-60 2-30 0-24-2L0 17z" fill="#ff0" />
                </svg>
              )}
              {n.mark === "short" && (
                <svg viewBox="0 0 118 17" aria-hidden="true" className="pointer-events-none absolute -top-px left-[51px] h-[17px] w-[118px] mix-blend-multiply">
                  <path d="M0 2h30V0h76v1h12v15H50v1H0z" fill="#ff0" />
                </svg>
              )}
            </div>
            {n.kids && <Branch nodes={n.kids} guides={[...guides, !last]} />}
          </li>
        );
      })}
    </ul>
  );
}

/* ---------- side tool box ---------- */

function ToolBox() {
  const top = ["pointer", "hand", "textTool", "broom"];
  const groups = ["bands", "crossBands", "texts"];
  const rest = ["reportTitle", "reportSummary", "headerBand", "footerBand", "window", "pageFooter", "dataBand", "table", "crossTab", "textComp", "image", "barcode", "panel", "hLine", "vLine", "rect", "roundRect", "chart"];
  const cell = "flex h-[23px] w-[26px] shrink-0 items-center justify-center";
  const line = <span className="my-px h-px w-6 shrink-0 bg-white" />;
  return (
    <div className="mt-px flex w-[29px] shrink-0 flex-col items-center self-start rounded-b-md border-b border-[#6f9bd8] bg-linear-to-b from-[#e3efff] via-[#c9dffd] to-[#a5c8fb]">
      <span className="flex h-[7px] items-center gap-[3px]">
        {[0, 1, 2, 3, 4].map((i) => (
          <span key={i} className="size-[2px] bg-[#5d8dd0]" />
        ))}
      </span>
      {top.map((n, i) => (
        <button key={n} type="button" aria-label={n} className={`${cell} ${i === 0 ? "border border-[#c05a08] bg-linear-to-b from-[#fdc35c] to-[#fccf5f]" : ""}`}>
          <Icon name={n} />
        </button>
      ))}
      {line}
      {groups.map((n) => (
        <React.Fragment key={n}>
          <button type="button" aria-label={n} className={cell}>
            <Icon name={n} />
          </button>
          <span className="flex h-[10px] items-center pl-1">
            <Tri dir="right" />
          </span>
        </React.Fragment>
      ))}
      {line}
      {rest.map((n) => (
        <button key={n} type="button" aria-label={n} className={cell}>
          <Icon name={n} />
        </button>
      ))}
      {line}
      <button type="button" aria-label="tools" className={cell}>
        <Icon name="tools" />
      </button>
    </div>
  );
}

/* ---------- centre ---------- */

function DocTab({ icon, text, width, path, active, className = "" }: { icon: string; text: string; width: number; path: string; active?: boolean; className?: string }) {
  return (
    <button type="button" role="tab" aria-selected={!!active} className={`relative flex h-[23px] shrink-0 items-center gap-[5px] pb-px text-[#15428b] ${active ? "z-10 text-[12px] font-bold" : "text-[11px]"} ${className}`}>
      <svg viewBox={`0 0 ${width} 23`} preserveAspectRatio="none" aria-hidden="true" className="absolute inset-0 size-full">
        <path d={path} fill={active ? "#fff" : "url(#tab)"} stroke="#8ba4cc" />
      </svg>
      <span className="relative"><Icon name={icon} /></span>
      <span className="relative whitespace-nowrap">{text}</span>
    </button>
  );
}

function TextBtn({ icon, text, className }: { icon: string; text: string; className: string }) {
  return (
    <button type="button" className={`flex h-[23px] shrink-0 items-center gap-[5px] text-[11px] text-[#15428b] ${className}`}>
      <Icon name={icon} />
      {text}
    </button>
  );
}

function Viewer() {
  const modes = ["fullScreen", "viewOne", "viewTwo", "viewMany", "pageWidth"];
  return (
    <div className="flex min-w-0 flex-1 flex-col border-b border-l border-[#d6d2c9]">
      <div role="tablist" className="flex h-[25px] shrink-0 items-end overflow-hidden border-b border-[#8ba4cc] bg-linear-to-b from-[#dfecff] to-[#afd0ff]">
        <DocTab icon="pageTab" text="Page1" width={65} className="w-[65px] pl-[2px]" path="M.5 23V5Q.5 .5 5 .5H50C58 .5 60 8 65 14" />
        <DocTab icon="preview" text="Preview" width={87} active className="w-[87px] pl-[2px]" path="M.5 24V5Q.5 .5 5 .5H66C78 .5 74 20 86.5 23V24" />
        <DocTab icon="htmlPreview" text="HTML Preview" width={115} className="-ml-[9px] w-[115px] pl-[3px]" path="M.5 24V5Q.5 .5 5 .5H90C100 .5 101 20 114 23" />
      </div>
      <div className="flex h-7 shrink-0 items-center border-t border-[#f3f6fb] bg-linear-to-b from-[#e3efff] via-[#d3e5ff] to-[#aed0ff]">
        <Grip />
        <TextBtn icon="print" text="Print" className="w-[56px] pl-1" />
        <TextBtn icon="open" text="Open" className="w-[58px] pl-1" />
        <TextBtn icon="save" text="Save" className="w-[56px] pl-[5px]" />
        <Drop label="Save options" tone="text-[#15428b]" />
        <Btn icon="mail" />
        <Drop label="Send options" tone="text-[#15428b]" />
        <Sep />
        <Btns names={["newPage", "delPage", "editPage", "pageSetup"]} />
        <Sep />
        <Btns names={["bookmark", "params", "thumbs"]} />
        <Sep />
        <Btn icon="find" />
        <div className="ml-[5px] flex h-[21px] items-stretch rounded-sm border border-[#7da0d0] bg-linear-to-b from-[#d5e4f8] via-[#b9d0f0] to-[#cfe0f7]">
          {modes.map((m) => (
            <React.Fragment key={m}>
              <button type="button" aria-label={m} className={`flex items-center justify-center border-r border-[#d8e6f8] last:border-r-0 ${m === "pageWidth" ? "w-[22px]" : "w-6"}`}>
                <Icon name={m} />
              </button>
              {m === "viewMany" && (
                <button type="button" aria-label="Page layout options" className="flex w-[13px] items-center justify-center border-r border-[#d8e6f8]">
                  <Tri tone="text-[#15428b]" />
                </button>
              )}
            </React.Fragment>
          ))}
        </div>
      </div>
      <div className="flex min-h-0 flex-1 overflow-hidden border-t-2 border-b border-l-2 border-t-[#555a60] border-b-[#d6d2c9] border-l-[#4a4a46] bg-white">
        <div className="flex min-w-0 flex-1 overflow-hidden bg-[#96b2df] pt-[5px] pr-[11px] pl-[4px]">
          <main className="flex-1 border-2 border-b-0 border-[#ffcb31] bg-white pt-[37px] pr-[37px] pl-[38px] shadow-[3px_3px_1px_#55709c]">
            <Report />
          </main>
        </div>
        <div className="flex w-[18px] shrink-0 flex-col items-stretch border-l border-[#c9d3df] bg-[#f4f5f8]">
          <button type="button" aria-label="Scroll up" className="flex h-[16px] items-center justify-center">
            <svg viewBox="0 0 10 6" className="h-[6px] w-[10px]"><path d="M0 5.5h10L5 .5z" fill="#4a5f8f" /></svg>
          </button>
          <div className="mx-[2px] flex h-[425px] flex-col items-center justify-center gap-[2px] rounded-xs border border-[#6478a8] bg-linear-to-r from-[#f3f6fa] via-[#dfe4ec] to-[#b9cbe2]">
            {[0, 1, 2, 3].map((i) => (
              <span key={i} className="h-px w-2 bg-[#7d8696]" />
            ))}
          </div>
          <span className="flex-1" />
          <button type="button" aria-label="Scroll down" className="flex h-[16px] items-center justify-center">
            <svg viewBox="0 0 10 6" className="h-[6px] w-[10px]"><path d="M0 .5h10L5 5.500z" fill="#4a5f8f" /></svg>
          </button>
        </div>
      </div>
      <PageBar />
      <div className="flex h-6 shrink-0 items-center gap-2 pl-[149px] text-[11px]">
        <button type="button" disabled className="h-5 w-24 bg-[#dbd8d1] text-[#8a8883]">Stop</button>
        <button type="button" className="h-5 w-24 bg-[#dbd8d1] text-black">Refresh</button>
        <span className="pl-[6px]"><Check label="Auto Refresh" checked /></span>
      </div>
    </div>
  );
}

function PageBar() {
  const nav = "flex w-6 items-center justify-center border-r border-[#d3e2f7] last:border-r-0";
  const arrow = (d: string) => (
    <svg viewBox="0 0 10 12" aria-hidden="true" className="h-3 w-[10px]"><path d={d} fill="#96a9c8" /></svg>
  );
  return (
    <div className="flex h-7 shrink-0 items-stretch border-t border-[#5b86bf] bg-linear-to-b from-[#d6e5fa] from-33% via-[#b9d4f7] via-36% to-[#d2e3fa]">
      <div className="my-[2px] ml-px flex items-stretch rounded-xs border border-[#7da0d0] bg-linear-to-b from-[#cbddf5] from-33% via-[#b2cbee] via-36% to-[#c6daf5] text-[11px] text-[#15428b]">
        <button type="button" aria-label="First page" className={nav}>{arrow("M0 1h3v10H0zM10 1v10L4 6z")}</button>
        <button type="button" aria-label="Previous page" className={nav}>{arrow("M8 1v10L2 6z")}</button>
        <span className="flex w-[67px] items-center justify-center border-r border-[#d8e6f8]">Page 1 of 1</span>
        <button type="button" aria-label="Next page" className={nav}>{arrow("M2 1v10l6-5z")}</button>
        <button type="button" aria-label="Last page" className={nav}>{arrow("M0 1v10l6-5zM7 1h3v10H7z")}</button>
      </div>
      <div className="ml-auto flex w-[276px] items-center border-l border-[#5b86bf] bg-linear-to-b from-[#b9d4f8] via-[#a3c2ef] via-38% to-[#7092c4] pl-[4px] text-[11px] text-[#15428b]">
        <div className="flex h-5 items-stretch border border-[#a5c0e6] bg-[#c0d6f3]">
          <button type="button" aria-label="Single page" className="flex w-[21px] items-center justify-center border-r border-[#dbe8f9]">
            <svg viewBox="0 0 10 12" className="h-3 w-[10px]"><rect x=".5" y=".5" width="9" height="11" fill="#eef4fd" stroke="#5c83bb" /></svg>
          </button>
          <button type="button" aria-label="Continuous" className="flex w-[22px] items-center justify-center">
            <svg viewBox="0 0 10 12" className="h-3 w-[10px]"><path d="M.5 0v4.500h9V0M.5 12V7.500h9V12" fill="#eef4fd" stroke="#5c83bb" /></svg>
          </button>
          <button type="button" aria-label="Multiple pages" aria-pressed="true" className="flex w-[21px] items-center justify-center bg-linear-to-b from-[#fdc676] via-[#fdb04a] to-[#ffe08a]">
            <svg viewBox="0 0 12 12" className="size-3"><path d="M.5 0v4.500h4V0M7.500 0v4.500h4V0M.5 12V7.500h4V12M7.500 12V7.500h4V12" fill="#fff" stroke="#a08a68" /></svg>
          </button>
        </div>
        <span className="ml-[15px] w-[48px]">100%</span>
        <ZoomBtn label="Zoom out" d="M4 8h8" />
        <span className="relative flex h-4 flex-1 items-center justify-center">
          <span className="absolute inset-x-0 h-[2px] border-b border-white bg-[#4f75ad]" />
          <svg viewBox="0 0 10 14" aria-hidden="true" className="relative h-[14px] w-[10px]">
            <path d="M.5 .5h9v9L5 13.500 .5 9.500z" fill="#e6eefa" stroke="#3e5f93" />
            <path d="M5 3v6" stroke="#3e5f93" />
          </svg>
          <input type="range" aria-label="Zoom" min={10} max={190} defaultValue={100} className="absolute inset-0 w-full opacity-0" />
        </span>
        <ZoomBtn label="Zoom in" d="M4 8h8M8 4v8" />
        <span className="w-[14px]" />
      </div>
    </div>
  );
}

function ZoomBtn({ label, d }: { label: string; d: string }) {
  return (
    <button type="button" aria-label={label} className="size-4 shrink-0">
      <svg viewBox="0 0 16 16" className="size-4">
        <circle cx="8" cy="8" r="7.3" fill="#dbe7f8" stroke="#4b6998" />
        <path d={d} stroke="#38506f" strokeWidth="2" />
      </svg>
    </button>
  );
}

/* ---------- right panel ---------- */

function PanelTab({ icon, text, active }: { icon: string; text: string; active?: boolean }) {
  return (
    <button type="button" role="tab" aria-selected={!!active} className={`flex h-[21px] items-center gap-[3px] rounded-b-md border border-t-0 border-[#8ba9d6] pr-[3px] pl-[2px] text-[11px] text-[#15428b] ${active ? "bg-white" : "bg-linear-to-b from-[#dbe9fd] to-[#b9d3f7]"}`}>
      <Icon name={icon} />
      {text}
    </button>
  );
}

function Dictionary() {
  return (
    <aside className="ml-[3px] flex w-[300px] shrink-0 flex-col border-l border-[#d6e6fd]">
      <div className="mr-px flex h-5 shrink-0 items-center border border-[#6593cf] bg-linear-to-b from-[#d9e8fd] to-[#b4d2fc] px-[5px] text-[11px] text-[#15428b]">
        Dictionary
        <button type="button" aria-label="Pin" className="ml-auto">
          <svg viewBox="0 0 8 10" className="h-[10px] w-2"><path d="M2 .5h4.500v5M2.500 .5v5M0 5.500h8M4 6v4M5.500 1v4" fill="none" stroke="#15428b" /></svg>
        </button>
        <button type="button" aria-label="Close panel" className="ml-[9px]">
          <svg viewBox="0 0 8 8" className="size-2"><path d="M.5 1l7 6.500M7.500 1l-7 6.500" stroke="#15428b" strokeWidth="1.6" /></svg>
        </button>
      </div>
      <div className="mx-[2px] mt-px flex h-[27px] shrink-0 items-center bg-linear-to-b from-[#e3efff] via-[#d3e5ff] to-[#aed0ff] pl-[6px] text-[11px] text-[#15428b]">
        <button type="button" className="w-[42px] text-left">Actions</button>
        <Drop label="Actions menu" tone="text-[#15428b]" />
        <Btn icon="newItem" tight />
        <Drop label="New item menu" tone="text-[#15428b]" />
        <Btns names={["edit", "remove"]} tight />
        <Sep />
        <Btns names={["up", "down", "sort"]} tight />
        <Drop label="Sort menu" tone="text-[#15428b]" />
      </div>
      <div className="mr-[3px] ml-[2px] min-h-0 flex-1 overflow-hidden border-t-2 border-l-2 border-[#5a5a56] bg-white pl-[3px]">
        <div className="isolate bg-white">
          <Branch nodes={TREE} guides={[]} />
        </div>
      </div>
      <div className="flex h-[52px] shrink-0 flex-col pt-px pl-[5px]">
        <Check label="Create Field on Double Click" checked />
        <Check label="Create Label" checked />
        <Check label="Use Aliases" />
      </div>
      <div role="tablist" className="flex h-[25px] shrink-0 items-start gap-[3px] border-t border-[#8ba9d6] bg-[#d7e6fb] pl-[5px]">
        <PanelTab icon="properties" text="Properties" />
        <PanelTab icon="dictionary" text="Dictionary" active />
        <PanelTab icon="reportTree" text="Report Tree" />
      </div>
    </aside>
  );
}

/* ---------- window ---------- */

function WinBtn({ label, d, className = "" }: { label: string; d: string; className?: string }) {
  return (
    <button type="button" aria-label={label} className={`flex h-[14px] w-[15px] items-center justify-center border border-t-white border-r-[#404040] border-b-[#404040] border-l-white bg-[#d6d2c9] ${className}`}>
      <svg viewBox="0 0 10 10" className="size-[10px]"><path d={d} fill="none" stroke="#000" strokeWidth="1.5" /></svg>
    </button>
  );
}

export default function App() {
  return (
    <div className="flex h-screen overflow-hidden border-y border-l-2 border-[#d6d2c9] bg-[#bfdbff] font-['Liberation_Sans',Arial,sans-serif]">
      <svg width="0" height="0" aria-hidden="true" className="absolute">
        <defs>
          <linearGradient id="sq" x1="0" y1="0" x2="1" y2="1"><stop offset="0.3" stopColor="#fff" /><stop offset="1" stopColor="#ccd6f2" /></linearGradient>
          <linearGradient id="tab" x1="0" y1="0" x2="0" y2="1"><stop offset="0" stopColor="#e4effe" /><stop offset="0.45" stopColor="#d3e3fa" /><stop offset="0.5" stopColor="#bcd5f8" /><stop offset="1" stopColor="#b2cff6" /></linearGradient>
        </defs>
      </svg>
      <div className="flex min-w-0 flex-1 flex-col">
        <header className="flex h-[19px] shrink-0 items-center gap-px border-b border-[#d6d2c9] bg-linear-to-r from-[#0a246a] to-[#a6caf0] pr-[2px] pl-[2px] text-[12px] font-bold text-white">
          <Icon name="app" />
          <h1>Report.mrt - Designer</h1>
          <WinBtn label="Minimize" d="M2 8h5" className="ml-auto" />
          <WinBtn label="Maximize" d="M1 2h8M1.5 1v8h7V1" />
          <WinBtn label="Close window" d="M1.5 1.5l7 7M8.5 1.5l-7 7" className="ml-[2px]" />
        </header>
        <nav className="flex h-[25px] shrink-0 items-center gap-[18px] pl-[10px] text-[11px] text-[#15428b]">
          {["File", "Edit", "View", "Tools", "Help"].map((m) => (
            <button key={m} type="button">{m}</button>
          ))}
        </nav>
        <div className="mb-px flex shrink-0 gap-[3px]">
          <Bar className="w-[715px] shrink-0">
            <Btns names={["new", "open", "save", "preview"]} />
            <Sep />
            <Btns names={["newPage", "newForm", "delPage", "pageSetup"]} />
            <Sep />
            <Btns names={["undo", "redo"]} />
            <Sep />
            <Btns names={["cut", "copy", "paste", "del"]} />
            <Sep />
            <Btn icon="select" />
            <Sep />
            <Btns names={["grid", "gridSnap", "window", "order", "note"]} on={["grid", "gridSnap", "window"]} />
            <Drop label="Note options" />
            <Btn icon="ruler" on />
            <Sep />
            <span className="w-[3px]" />
            <Combo label="Zoom" value="75%" width="w-[70px]" />
            <button type="button" className="w-[62px] text-center text-[11px] text-black">Close</button>
          </Bar>
          <Bar className="w-[364px] shrink-0">
            <Btns names={["rectFull", "rectNone"]} on={["rectNone"]} />
            <Sep />
            <Btns names={["rectTop", "rectLeft", "rectBottom", "rectRight"]} />
            <Sep />
            <Btn icon="shadow" />
            <Sep />
            <Btn icon="fill" />
            <Drop label="Fill colours" />
            <Btn icon="brush" />
            <Drop label="Line colours" />
            <button type="button" aria-label="Line style" className="ml-[3px] flex h-[13px] w-[62px] items-center border border-black bg-white">
              <span className="h-[2px] w-full bg-black" />
            </button>
            <Drop label="Line styles" />
          </Bar>
          <Bar className="min-w-0 flex-1" more>
            <Btn icon="styles" />
          </Bar>
        </div>
        <div className="flex shrink-0 gap-[3px]">
          <Bar className="w-[579px] shrink-0">
            <span className="w-[3px]" />
            <Combo label="Font" value="Arial" disabled width="w-[130px]" />
            <span className="w-[5px]" />
            <Combo label="Font size" value="8" disabled width="w-[50px]" />
            <span className="w-[2px]" />
            <Sep />
            <Btns names={["bold", "italic", "underline"]} />
            <Sep />
            <Btns names={["alignL", "alignC", "alignR", "alignJ"]} />
            <Sep />
            <Btns names={["vTop", "vMid", "vBot"]} />
            <Sep />
            <Btn icon="rotate" />
            <Drop label="Rotation" tone="text-[#7f8a97]" />
            <Sep />
            <Btn icon="fontColor" />
            <Drop label="Font colours" tone="text-[#7f8a97]" />
            <Btn icon="highlight" />
          </Bar>
          <Bar className="w-[548px] shrink-0">
            <Btn icon="alignGrid" />
            <Sep />
            <Btns names={["oLeft", "oCenter", "oRight"]} />
            <Sep />
            <Btns names={["oTop", "oMiddle", "oBottom"]} />
            <Sep />
            <Btns names={["sizeBoth", "sizeW", "sizeH"]} />
            <Sep />
            <Btns names={["spaceH", "spaceV"]} />
            <Sep />
            <Btns names={["centerH", "centerV"]} />
            <Sep />
            <Btns names={["front", "back"]} />
            <Sep />
            <Btns names={["forward", "backward"]} />
            <Sep />
            <Btns names={["lock", "link"]} />
          </Bar>
        </div>
        <div className="flex min-h-0 flex-1">
          <ToolBox />
          <Viewer />
          <Dictionary />
        </div>
        <footer className="flex h-7 shrink-0 items-center border-t border-[#5b86bf] bg-linear-to-b from-[#dce9fb] from-30% via-[#b6d1f6] via-35% to-[#d8e6fa] text-[11px] text-black">
          <Grip />
          <button type="button" className="ml-[6px] flex items-center gap-[12px] pr-1">
            Centimeters
            <Tri dir="up" />
          </button>
          <Sep />
          <button type="button" className="ml-[8px] flex items-center gap-[8px] pr-[7px]">
            <svg viewBox="0 0 8 12" aria-hidden="true" className="h-3 w-2"><path d="M.5 .5v11l7-5.500z" fill="#3c9440" stroke="#1f5c24" /></svg>
            Report Checker
          </button>
          <Sep />
          <span className="pr-[8px] pl-[2px] text-[#15428b]">Page1</span>
          <Sep />
        </footer>
      </div>
      <div className="w-[3px] shrink-0 bg-[#d6d2c9]" />
      <div className="w-px shrink-0 bg-[#40464e]" />
      <div className="w-px shrink-0 bg-[#2c5f9e]" />
    </div>
  );
}
